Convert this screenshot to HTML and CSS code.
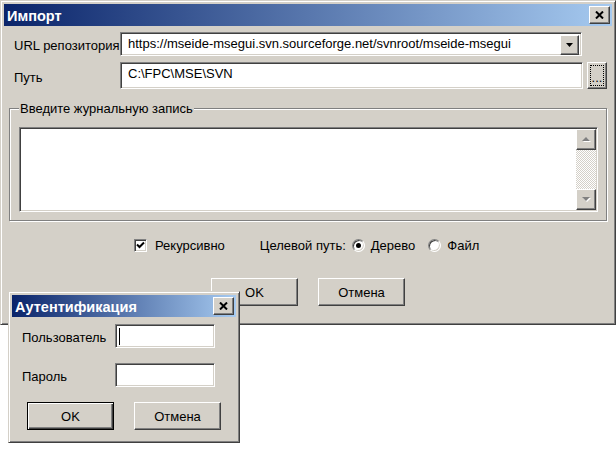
FILE: index.html
```html
<!DOCTYPE html>
<html lang="ru">
<head>
  <meta charset="UTF-8">
  <title>Импорт</title>
  <link rel="stylesheet" href="styles.css">
</head>
<body>

  <div class="desktop">
    <!-- Main import window -->
    <div class="window main-window">
      <div class="titlebar">
        <span class="title">Импорт</span>
        <span class="close raised">
          <svg width="9" height="8" viewBox="0 0 9 8"><path d="M1 0.5 L8 7.5 M8 0.5 L1 7.5" stroke="#000" stroke-width="2" fill="none"/></svg>
        </span>
      </div>
      <div class="client">
        <div class="row row-url">
          <span class="label">URL репозитория</span>
          <div class="combo sunken">
            <span class="value">https://mseide-msegui.svn.sourceforge.net/svnroot/mseide-msegui</span>
            <span class="drop raised">
              <svg width="7" height="4" viewBox="0 0 7 4"><polygon points="0,0 7,0 3.5,4" fill="#000"/></svg>
            </span>
          </div>
        </div>

        <div class="row row-path">
          <span class="label">Путь</span>
          <div class="edit sunken path-edit">C:\FPC\MSE\SVN</div>
          <span class="btn raised browse">...</span>
        </div>

        <div class="group">
          <span class="legend">Введите журнальную запись</span>
          <div class="memo sunken">
            <div class="memo-text"></div>
            <div class="scrollbar">
              <span class="scroll-btn raised">
                <svg width="9" height="6" viewBox="0 0 9 6"><polygon points="1,5 9,5 5,1" fill="#fff"/><polygon points="0,4 8,4 4,0" fill="#808080"/></svg>
              </span>
              <span class="scroll-track"></span>
              <span class="scroll-btn raised">
                <svg width="9" height="6" viewBox="0 0 9 6"><polygon points="1,1 9,1 5,5" fill="#fff"/><polygon points="0,0 8,0 4,4" fill="#808080"/></svg>
              </span>
            </div>
          </div>
        </div>

        <div class="options">
          <span class="check">
            <span class="checkbox">
              <svg width="9" height="9" viewBox="0 0 9 9"><path d="M1 3.5 L3.5 6 L8 1.5" stroke="#000" stroke-width="2" fill="none"/></svg>
            </span>
            Рекурсивно
          </span>
          <span class="target-label">Целевой путь:</span>
          <span class="radio-item"><span class="radio checked"></span>Дерево</span>
          <span class="radio-item"><span class="radio"></span>Файл</span>
        </div>

        <div class="buttons">
          <span class="btn raised push">OK</span>
          <span class="btn raised push">Отмена</span>
        </div>
      </div>
    </div>

    <!-- Authentication dialog -->
    <div class="window auth-window">
      <div class="titlebar">
        <span class="title">Аутентификация</span>
        <span class="close raised">
          <svg width="9" height="8" viewBox="0 0 9 8"><path d="M1 0.5 L8 7.5 M8 0.5 L1 7.5" stroke="#000" stroke-width="2" fill="none"/></svg>
        </span>
      </div>
      <div class="client auth-client">
        <div class="auth-row">
          <span class="auth-label">Пользователь</span>
          <div class="edit sunken auth-edit"><span class="caret"></span></div>
        </div>
        <div class="auth-row">
          <span class="auth-label">Пароль</span>
          <div class="edit sunken auth-edit"></div>
        </div>
        <div class="auth-buttons">
          <span class="btn raised push default">OK</span>
          <span class="btn raised push">Отмена</span>
        </div>
      </div>
    </div>
  </div>

</body>
</html>
```

FILE: styles.css
```css
body {
  margin: 0;
  background-color: #fff;
  font-family: 'Liberation Sans', Arial, sans-serif;
  font-size: 13px;
  color: #000;
}

.desktop {
  position: relative;
  width: 616px;
  height: 450px;
}

/* Classic window frame */
.window {
  position: absolute;
  box-sizing: border-box;
  background-color: #d4d0c8;
  border: 1px solid;
  border-color: #d4d0c8 #404040 #404040 #d4d0c8;
  box-shadow: inset 1px 1px #fff, inset -1px -1px #808080;
  padding: 3px;
  display: flex;
  flex-direction: column;
}

.main-window {
  left: 0;
  top: 0;
  width: 616px;
  height: 325px;
}

.auth-window {
  left: 8px;
  top: 291px;
  width: 232px;
  height: 152px;
}

.titlebar {
  height: 22px;
  flex: none;
  display: flex;
  align-items: center;
  justify-content: space-between;
  padding: 0 2px 0 3px;
  background: linear-gradient(to right, #0a246a, #a6caf0);
}

.title {
  color: #fff;
  font-weight: bold;
  font-size: 14.5px;
  padding-top: 2px;
}

/* 3D edges */
.raised {
  box-sizing: border-box;
  background-color: #d4d0c8;
  border: 1px solid;
  border-color: #fff #404040 #404040 #fff;
  box-shadow: inset -1px -1px #808080;
}

.sunken {
  box-sizing: border-box;
  background-color: #fff;
  border: 1px solid;
  border-color: #808080 #fff #fff #808080;
  box-shadow: inset 1px 1px #404040, inset -1px -1px #d4d0c8;
}

.close {
  width: 21px;
  height: 18px;
  display: flex;
  align-items: center;
  justify-content: center;
}

.client {
  flex: 1;
  padding: 0 5px;
}

.row {
  display: flex;
  align-items: center;
  padding-left: 5px;
}

.row-url {
  margin-top: 6px;
  height: 24px;
}

.row-path {
  margin-top: 6px;
  height: 27px;
}

.label {
  width: 106px;
  padding-top: 3px;
}

.row-path .label {
  padding-top: 4px;
}

.combo {
  width: 462px;
  height: 24px;
  display: flex;
  align-items: flex-start;
  justify-content: space-between;
  padding: 2px 2px 2px 7px;
}

.combo .value {
  line-height: 15px;
  padding-top: 1px;
}

.drop {
  width: 19px;
  height: 20px;
  display: flex;
  align-items: center;
  justify-content: center;
}

.edit {
  height: 27px;
  padding: 3px 7px;
  line-height: 15px;
}

.path-edit {
  width: 463px;
}

.btn {
  display: flex;
  align-items: center;
  justify-content: center;
}

.browse {
  width: 20px;
  height: 27px;
  margin-left: 4px;
  padding-top: 4px;
  outline: 1px dotted #000;
  outline-offset: -4px;
}

/* Group box */
.group {
  box-sizing: border-box;
  height: 113px;
  margin-top: 19px;
  border: 1px solid #808080;
  box-shadow: inset 1px 1px #fff, 1px 1px #fff;
  padding: 0 8px 8px 9px;
}

.legend {
  display: block;
  width: max-content;
  margin-top: -8px;
  padding: 0 1px;
  line-height: 15px;
  background-color: #d4d0c8;
}

.memo {
  width: 579px;
  height: 85px;
  margin-top: 11px;
  padding: 2px;
  display: flex;
}

.memo-text {
  flex: 1;
}

.scrollbar {
  width: 20px;
  margin: -1px -1px -1px 0;
  display: flex;
  flex-direction: column;
}

.scroll-btn {
  height: 21px;
  flex: none;
  display: flex;
  align-items: center;
  justify-content: center;
}

.scroll-track {
  flex: 1;
  background: repeating-conic-gradient(#fff 0 25%, #d4d0c8 0 50%) 0 0 / 2px 2px;
}

/* Options row */
.options {
  display: flex;
  align-items: center;
  height: 17px;
  margin-top: 16px;
  padding-left: 125px;
}

.check {
  display: flex;
  align-items: center;
  gap: 8px;
  margin-right: 35px;
}

.checkbox {
  box-sizing: border-box;
  width: 13px;
  height: 13px;
  background-color: #fff;
  border: 1px solid;
  border-color: #808080 #fff #fff #808080;
  box-shadow: inset 1px 1px #404040, inset -1px -1px #d4d0c8;
  display: flex;
  align-items: center;
  justify-content: center;
}

.target-label {
  margin-right: 6px;
}

.radio-item {
  display: flex;
  align-items: center;
  gap: 6px;
  margin-right: 13px;
}

.radio {
  box-sizing: border-box;
  width: 13px;
  height: 13px;
  border-radius: 50%;
  background-color: #fff;
  border: 1px solid;
  border-color: #808080 #fff #fff #808080;
  box-shadow: inset 1px 1px #404040, inset -1px -1px #d4d0c8;
  display: flex;
  align-items: center;
  justify-content: center;
}

.radio.checked::after {
  content: "";
  width: 5px;
  height: 5px;
  border-radius: 50%;
  background-color: #000;
}

/* Push buttons */
.buttons {
  display: flex;
  justify-content: center;
  gap: 20px;
  margin-top: 24px;
}

.push {
  width: 87px;
  height: 28px;
}

.push.default {
  border: 1px solid #000;
  box-shadow: inset 1px 1px #fff, inset -1px -1px #404040, inset -2px -2px #808080;
}

/* Authentication dialog */
.auth-client {
  padding: 0 0 0 10px;
}

.auth-row {
  display: flex;
  align-items: center;
  margin-top: 7px;
}

.auth-row + .auth-row {
  margin-top: 15px;
}

.auth-label {
  width: 93px;
  padding-top: 2px;
}

.auth-edit {
  width: 100px;
  height: 24px;
  padding: 3px 2px;
}

.caret {
  display: block;
  width: 1px;
  height: 17px;
  margin-left: 1px;
  background-color: #000;
}

.auth-buttons {
  display: flex;
  gap: 20px;
  margin-top: 15px;
  padding-left: 5px;
}
```
